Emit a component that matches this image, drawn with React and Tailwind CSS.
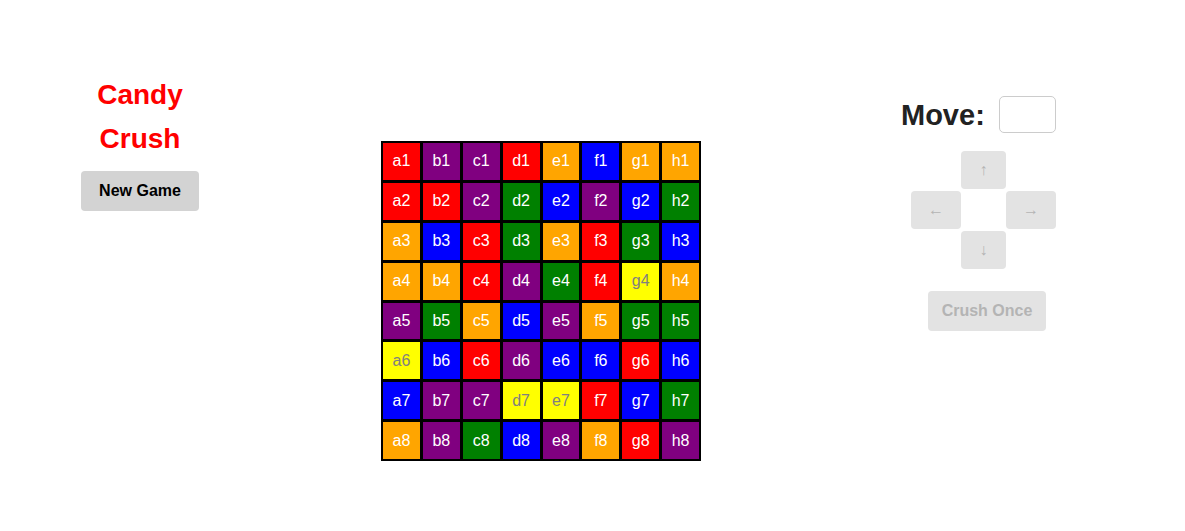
import React from "react";

const COLORS = {
    R: "bg-[#ff0000] text-white",
    P: "bg-[#800080] text-white",
    G: "bg-[#008000] text-white",
    B: "bg-[#0000ff] text-white",
    O: "bg-[#ffa500] text-white",
    Y: "bg-[#ffff00] text-[#808080]",
};

const ROWS = [
    "RPPROBOO",
    "RRPGBPBG",
    "OBRGORGB",
    "OORPGRYO",
    "PGOBPOGG",
    "YBRPBBRB",
    "BPPYYRBG",
    "OPGBPORP",
];

const LETTERS = "abcdefgh";

function Board() {
    return (
        <div className="grid grid-cols-8 grid-rows-8 gap-[3px] p-[2px] bg-black w-[320px] h-[320px]">
            {ROWS.map((row, r) =>
                row.split("").map((c, i) => (
                    <div key={`${r}-${i}`} className={`${COLORS[c]} flex items-center justify-center text-[16px]`}>
                        {LETTERS[i]}{r + 1}
                    </div>
                ))
            )}
        </div>
    );
}

function ArrowButton({ children, className }) {
    return (
        <button type="button" disabled className={`${className} h-[38px] bg-[#e3e3e3] text-[#b4b4b4] rounded-[4px] text-[16px] flex items-center justify-center`}>
            {children}
        </button>
    );
}

export default function App() {
    return (
        <div className="w-full h-[531px] bg-white flex items-start font-['Liberation_Sans',Arial,sans-serif]">
            <div className="ml-[81px] mt-[73px] w-[118px] flex flex-col items-center">
                <h1 className="text-[28px] leading-[44px] font-bold text-[#ff0000] text-center">Candy Crush</h1>
                <button type="button" className="mt-[10px] w-[118px] h-[40px] bg-[#d3d3d3] rounded-[4px] text-[16px] font-bold text-black">New Game</button>
            </div>

            <div className="ml-[182px] mt-[141px]">
                <Board />
            </div>

            <div className="ml-[200px] mt-[96px] w-[155px] flex flex-col">
                <div className="flex items-center h-[37px] gap-[14px]">
                    <span className="text-[29px] leading-[37px] font-bold text-[#222222] mt-[2px]">Move:</span>
                    <input type="text" className="w-[57px] h-[37px] border border-[#cccccc] rounded-[5px] bg-white outline-none" />
                </div>
                <div className="ml-[10px] mt-[18px] grid grid-cols-[50px_45px_50px] grid-rows-[38px_38px_38px] gap-y-[2px]">
                    <div />
                    <ArrowButton className="w-[45px]">↑</ArrowButton>
                    <div />
                    <ArrowButton className="w-[50px]">←</ArrowButton>
                    <div />
                    <ArrowButton className="w-[50px]">→</ArrowButton>
                    <div />
                    <ArrowButton className="w-[45px]">↓</ArrowButton>
                    <div />
                </div>
                <button type="button" disabled className="ml-[27px] mt-[22px] w-[118px] h-[40px] bg-[#e3e3e3] text-[#b4b4b4] rounded-[4px] text-[16px] font-bold">Crush Once</button>
            </div>
        </div>
    );
}
